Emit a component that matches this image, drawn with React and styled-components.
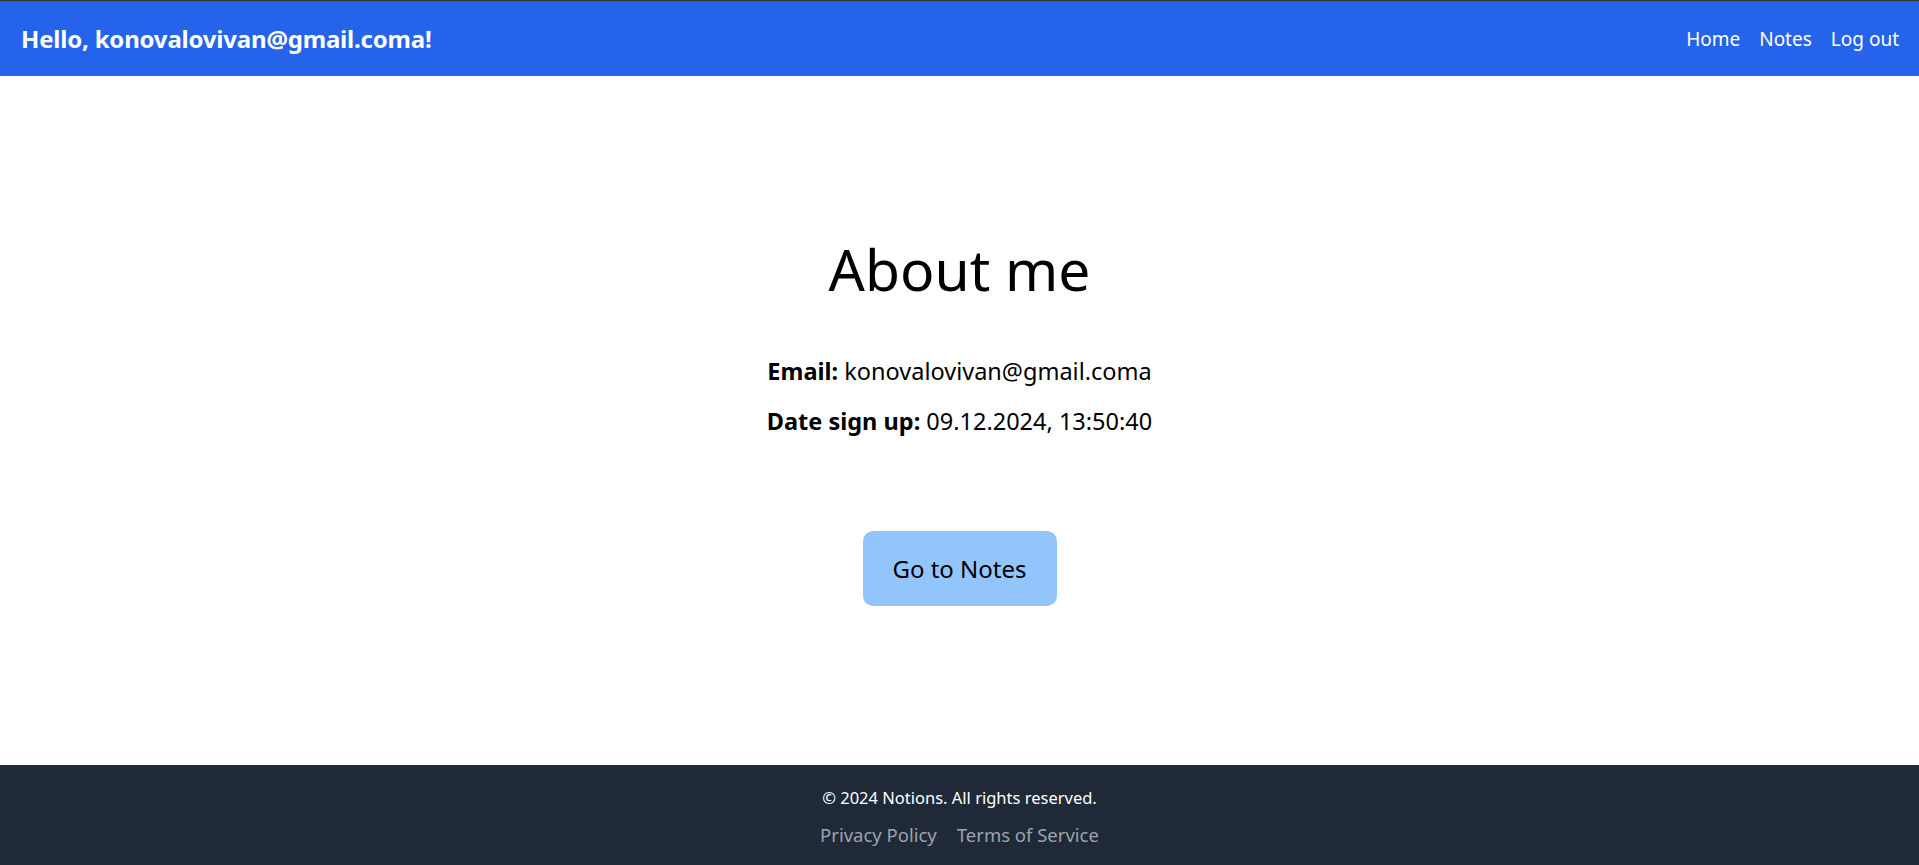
import React from "react";
import styled, { createGlobalStyle } from "styled-components";

const Global = createGlobalStyle`
  html, body { margin: 0; padding: 0; }
  body { font-family: "Noto Sans", "Open Sans", sans-serif; color: #000; background: #fff; }
  * { box-sizing: border-box; }
`;

const Page = styled.div`
  min-height: 100vh;
  display: flex;
  flex-direction: column;
`;

const Header = styled.header`
  height: 76px;
  border-top: 1px solid #333;
  background: #2563eb;
  color: #fff;
  display: flex;
  align-items: center;
  justify-content: space-between;
  padding: 0 20px 0 21px;
`;

const Greeting = styled.h1`
  margin: 0;
  font-size: 24px;
  font-weight: 700;
  letter-spacing: -0.2px;
`;

const Nav = styled.nav`
  display: flex;
  gap: 19px;
`;

const NavLink = styled.a`
  color: #fff;
  text-decoration: none;
  font-size: 19px;
  cursor: pointer;
`;

const Main = styled.main`
  flex: 1;
  display: flex;
  flex-direction: column;
  align-items: center;
  justify-content: center;
  text-align: center;
`;

const Title = styled.h2`
  margin: 0 0 51px;
  font-size: 57px;
  font-weight: 400;
  line-height: 1.2;
`;

const InfoLine = styled.p`
  margin: 0 0 18px;
  font-size: 23.5px;
  line-height: 32px;
  b { font-weight: 700; }
`;

const Button = styled.button`
  margin-top: 76px;
  width: 194px;
  height: 75px;
  border: none;
  border-radius: 10px;
  background: #93c5fd;
  color: #000;
  font-family: inherit;
  font-size: 24px;
  cursor: pointer;
`;

const Footer = styled.footer`
  height: 100px;
  background: #1f2937;
  color: #fff;
  display: flex;
  flex-direction: column;
  align-items: center;
  padding-top: 21px;
`;

const Copy = styled.p`
  margin: 0;
  font-size: 16.5px;
  line-height: 24px;
`;

const FooterLinks = styled.div`
  display: flex;
  gap: 20px;
  margin-top: 12px;
`;

const FooterLink = styled.a`
  color: #9ca3af;
  font-size: 18.5px;
  text-decoration: none;
  cursor: pointer;
`;

export default function App() {
  return (
    <Page>
      <Global />
      <Header>
        <Greeting>Hello, konovalovivan@gmail.coma!</Greeting>
        <Nav>
          <NavLink>Home</NavLink>
          <NavLink>Notes</NavLink>
          <NavLink>Log out</NavLink>
        </Nav>
      </Header>
      <Main>
        <Title>About me</Title>
        <InfoLine><b>Email:</b> konovalovivan@gmail.coma</InfoLine>
        <InfoLine><b>Date sign up:</b> 09.12.2024, 13:50:40</InfoLine>
        <Button>Go to Notes</Button>
      </Main>
      <Footer>
        <Copy>© 2024 Notions. All rights reserved.</Copy>
        <FooterLinks>
          <FooterLink>Privacy Policy</FooterLink>
          <FooterLink>Terms of Service</FooterLink>
        </FooterLinks>
      </Footer>
    </Page>
  );
}
